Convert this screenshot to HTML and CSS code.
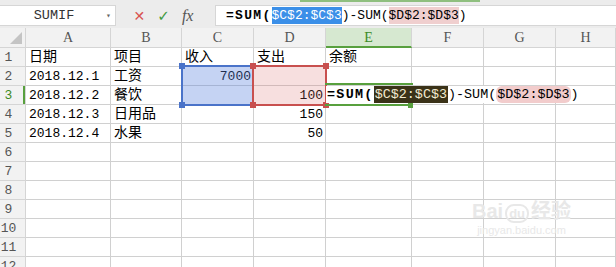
FILE: index.html
```html
<!DOCTYPE html>
<html lang="zh-CN">

<head>
    <meta charset="UTF-8">
    <title>SUM</title>
    <link rel="stylesheet" href="styles.css">
</head>

<body>
    <div class="top-strip"><span class="tab-line"></span></div>

    <div class="toolbar">
        <div class="name-box">
            <span class="name-text">SUMIF</span>
            <span class="caret">&#9662;</span>
        </div>
        <div class="fx-buttons">
            <span class="btn-cancel">&#10005;</span>
            <span class="btn-ok">&#10003;</span>
            <span class="btn-fx">fx</span>
        </div>
        <div class="formula-input">
            <b>=SUM(</b><span class="ref-blue">$C$2:$C$3</span>)-SUM(<span class="ref-pink">$D$2:$D$3</span>)
        </div>
    </div>

    <div class="sheet">
        <div class="grid">
            <div class="corner"><span class="corner-tri"></span></div>
            <div class="col-head">A</div>
            <div class="col-head">B</div>
            <div class="col-head">C</div>
            <div class="col-head">D</div>
            <div class="col-head active">E</div>
            <div class="col-head">F</div>
            <div class="col-head">G</div>
            <div class="col-head">H</div>

            <div class="row-head">1</div>
            <div class="cell zh">日期</div>
            <div class="cell zh">项目</div>
            <div class="cell zh">收入</div>
            <div class="cell zh">支出</div>
            <div class="cell zh">余额</div>
            <div class="cell"></div>
            <div class="cell"></div>
            <div class="cell"></div>

            <div class="row-head">2</div>
            <div class="cell">2018.12.1</div>
            <div class="cell zh">工资</div>
            <div class="cell num">7000</div>
            <div class="cell"></div>
            <div class="cell"></div>
            <div class="cell"></div>
            <div class="cell"></div>
            <div class="cell"></div>

            <div class="row-head active">3</div>
            <div class="cell">2018.12.2</div>
            <div class="cell zh">餐饮</div>
            <div class="cell"></div>
            <div class="cell num">100</div>
            <div class="cell"></div>
            <div class="cell"></div>
            <div class="cell"></div>
            <div class="cell"></div>

            <div class="row-head">4</div>
            <div class="cell">2018.12.3</div>
            <div class="cell zh">日用品</div>
            <div class="cell"></div>
            <div class="cell num">150</div>
            <div class="cell"></div>
            <div class="cell"></div>
            <div class="cell"></div>
            <div class="cell"></div>

            <div class="row-head">5</div>
            <div class="cell">2018.12.4</div>
            <div class="cell zh">水果</div>
            <div class="cell"></div>
            <div class="cell num">50</div>
            <div class="cell"></div>
            <div class="cell"></div>
            <div class="cell"></div>
            <div class="cell"></div>

            <div class="row-head">6</div>
            <div class="cell"></div><div class="cell"></div><div class="cell"></div><div class="cell"></div>
            <div class="cell"></div><div class="cell"></div><div class="cell"></div><div class="cell"></div>
            <div class="row-head">7</div>
            <div class="cell"></div><div class="cell"></div><div class="cell"></div><div class="cell"></div>
            <div class="cell"></div><div class="cell"></div><div class="cell"></div><div class="cell"></div>
            <div class="row-head">8</div>
            <div class="cell"></div><div class="cell"></div><div class="cell"></div><div class="cell"></div>
            <div class="cell"></div><div class="cell"></div><div class="cell"></div><div class="cell"></div>
            <div class="row-head">9</div>
            <div class="cell"></div><div class="cell"></div><div class="cell"></div><div class="cell"></div>
            <div class="cell"></div><div class="cell"></div><div class="cell"></div><div class="cell"></div>
            <div class="row-head">10</div>
            <div class="cell"></div><div class="cell"></div><div class="cell"></div><div class="cell"></div>
            <div class="cell"></div><div class="cell"></div><div class="cell"></div><div class="cell"></div>
            <div class="row-head">11</div>
            <div class="cell"></div><div class="cell"></div><div class="cell"></div><div class="cell"></div>
            <div class="cell"></div><div class="cell"></div><div class="cell"></div><div class="cell"></div>
            <div class="row-head">12</div>
            <div class="cell"></div><div class="cell"></div><div class="cell"></div><div class="cell"></div>
            <div class="cell"></div><div class="cell"></div><div class="cell"></div><div class="cell"></div>
        </div>

        <!-- range highlights drawn over the grid -->
        <div class="range range-blue">
            <span class="dot tl"></span><span class="dot bl"></span>
        </div>
        <div class="range range-red">
            <span class="dot tl"></span><span class="dot bl"></span>
            <span class="dot tr"></span><span class="dot br"></span>
        </div>

        <div class="cell-focus"><span class="handle"></span></div>
        <div class="cell-editor">
            <b>=SUM(</b><span class="ref-dark">$C$2:$C$3</span>)-SUM(<span class="ref-round">$D$2:$D$3</span>)
        </div>

        <div class="watermark">
            <div class="wm-logo">Bai<span class="paw">du</span>经验</div>
            <div class="wm-url">jingyan.baidu.com</div>
        </div>
    </div>
</body>

</html>
```

FILE: styles.css
```css
body {
    margin: 0;
    width: 616px;
    height: 267px;
    overflow: hidden;
    background-color: #ffffff;
    font-family: "Liberation Mono", "Noto Sans CJK SC", monospace;
    font-size: 13px;
    color: #000;
}

.top-strip {
    height: 5px;
    background-color: #ececec;
    position: relative;
}

.tab-line {
    position: absolute;
    left: 300px;
    top: 0;
    width: 180px;
    height: 2px;
    background-color: #8fbf7f;
}

.toolbar {
    display: flex;
    align-items: stretch;
    height: 21px;
    padding-bottom: 2px;
    background-color: #ececec;
}

.name-box {
    width: 116px;
    box-sizing: border-box;
    background-color: #fff;
    border: 1px solid #d6d6d6;
    border-left: none;
    display: flex;
    align-items: center;
    font-size: 13.5px;
    color: #333;
}

.name-text {
    flex: 1;
    text-align: center;
    padding-left: 2px;
}

.caret {
    font-size: 8px;
    color: #666;
    width: 9px;
}

.fx-buttons {
    width: 99px;
    display: flex;
    align-items: center;
    justify-content: center;
    gap: 12px;
    padding-right: 4px;
    box-sizing: border-box;
}

.btn-cancel {
    color: #d9534f;
    font-family: "DejaVu Sans", sans-serif;
    font-size: 14px;
}

.btn-ok {
    color: #3f9a3f;
    font-family: "DejaVu Sans", sans-serif;
    font-size: 15px;
}

.btn-fx {
    color: #555;
    font-family: "Liberation Serif", serif;
    font-style: italic;
    font-size: 16px;
}

.formula-input {
    flex: 1;
    background-color: #fff;
    border: 1px solid #d6d6d6;
    border-right: none;
    padding-left: 10px;
    line-height: 19px;
    white-space: nowrap;
    font-size: 13px;
}

.formula-input b,
.cell-editor b {
    font-weight: bold;
    letter-spacing: 1.3px;
}

.ref-blue {
    background-color: #3b8fe8;
    color: #fff;
    padding: 1px 0;
}

.ref-pink {
    background-color: #f0cfcf;
    padding: 1px 0;
}

.sheet {
    position: relative;
}

.grid {
    display: grid;
    grid-template-columns: 26px 85px 71px 72px 72px 86px 72px 72px 1fr;
    grid-template-rows: 20px;
    grid-auto-rows: 19px;
}

.corner,
.col-head,
.row-head {
    background-color: #f2f2f2;
    border-right: 1px solid #d5d5d5;
    border-bottom: 1px solid #d5d5d5;
    box-sizing: border-box;
    color: #555;
}

.corner {
    position: relative;
}

.corner-tri {
    position: absolute;
    right: 3px;
    bottom: 3px;
    width: 0;
    height: 0;
    border-left: 12px solid transparent;
    border-bottom: 12px solid #c4c4c4;
}

.col-head {
    text-align: center;
    line-height: 20px;
    font-family: "Liberation Serif", serif;
    font-size: 14px;
}

.col-head.active {
    background-color: #d6e8d0;
    border-bottom: 2px solid #58a03e;
    color: #3c8a24;
}

.row-head {
    text-align: center;
    padding-right: 8px;
    line-height: 19px;
    font-size: 13px;
}

.row-head.active {
    color: #3c8a24;
    box-shadow: inset -2px 0 0 #58a03e;
}

.cell {
    border-right: 1px solid #d0d0d0;
    border-bottom: 1px solid #d0d0d0;
    box-sizing: border-box;
    padding: 0 2px 0 3px;
    line-height: 19px;
    white-space: nowrap;
    overflow: hidden;
}

.cell.zh {
    font-size: 14px;
}

.cell.num {
    text-align: right;
}

.range {
    position: absolute;
    top: 37px;
    height: 41px;
    box-sizing: border-box;
    border: 2px solid;
}

.range-blue {
    left: 181px;
    width: 73px;
    border-color: #4a73c9;
    background-color: rgba(90, 130, 220, 0.35);
}

.range-red {
    left: 252px;
    width: 75px;
    border-color: #c8504f;
    background-color: rgba(220, 110, 110, 0.22);
}

.dot {
    position: absolute;
    width: 6px;
    height: 6px;
}

.range-blue .dot {
    background-color: #4a73c9;
}

.range-red .dot {
    background-color: #c8504f;
}

.dot.tl { left: -4px; top: -4px; }
.dot.bl { left: -4px; bottom: -4px; }
.dot.tr { right: -4px; top: -4px; }
.dot.br { right: -4px; bottom: -4px; }

.cell-focus {
    position: absolute;
    left: 325px;
    top: 55px;
    width: 88px;
    height: 23px;
    box-sizing: border-box;
    border-top: 2px solid #58a03e;
    border-bottom: 2px solid #58a03e;
}

.handle {
    position: absolute;
    right: 0;
    bottom: -4px;
    width: 5px;
    height: 5px;
    background-color: #58a03e;
}

.cell-editor {
    position: absolute;
    left: 326px;
    top: 58px;
    height: 17px;
    width: 266px;
    background-color: #fff;
    line-height: 17px;
    font-size: 13.4px;
    padding-left: 1px;
    white-space: nowrap;
}

.ref-dark {
    background-color: #3a3218;
    color: #f3ead0;
    padding: 1px 1px;
}

.ref-round {
    background-color: #f2cccc;
    border-radius: 6px;
    padding: 1px 1px;
}

.watermark {
    position: absolute;
    left: 472px;
    top: 171px;
    color: #e8e8e8;
    font-family: "Liberation Sans", "Noto Sans CJK SC", sans-serif;
    text-align: center;
}

.wm-logo {
    font-size: 20px;
    font-weight: bold;
    line-height: 24px;
}

.paw {
    display: inline-block;
    border: 2px solid #e8e8e8;
    border-radius: 9px;
    font-size: 13px;
    line-height: 15px;
    padding: 0 2px;
    margin: 0 2px;
}

.wm-url {
    font-size: 11px;
    line-height: 14px;
}
```
